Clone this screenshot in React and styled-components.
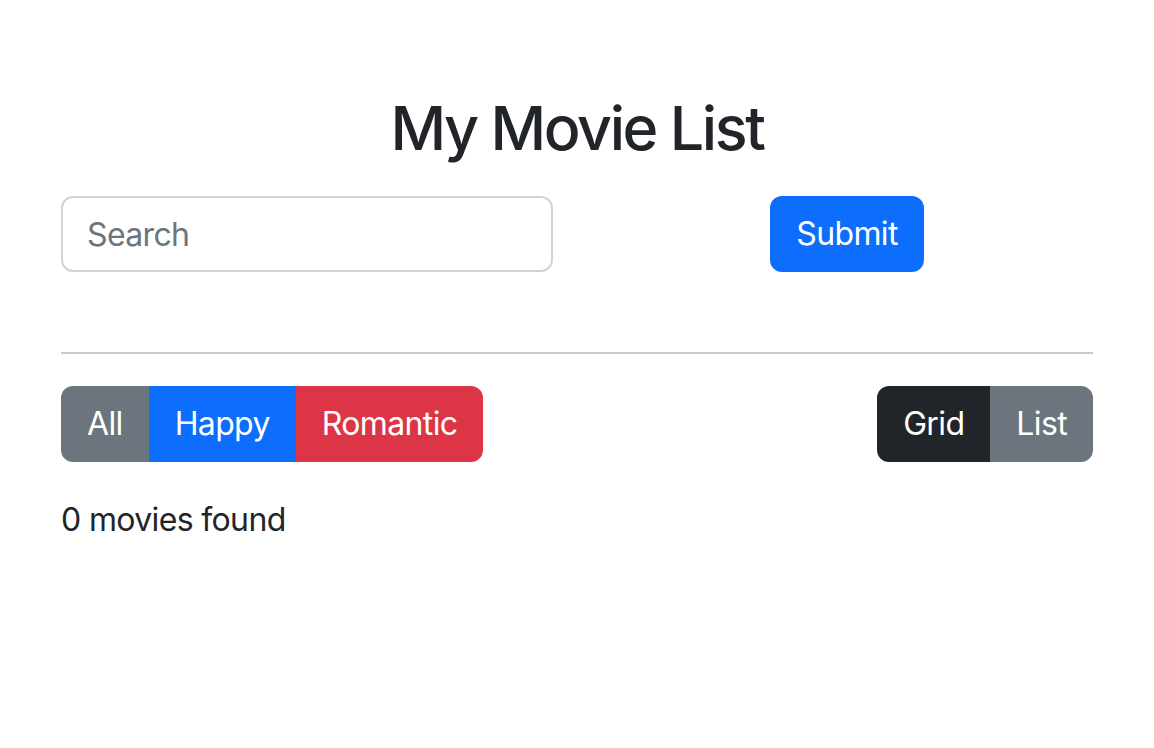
import React from "react";
import styled, { createGlobalStyle } from "styled-components";

const Global = createGlobalStyle`
  html, body { margin: 0; padding: 0; background: #fff; }
  body {
    font-family: Inter, "Noto Sans", "Liberation Sans", sans-serif;
    font-size: 32px;
    line-height: 1.5;
    letter-spacing: -0.02em;
    color: #212529;
  }
  * { box-sizing: border-box; }
`;

const Container = styled.div`
  width: 1080px;
  margin: 0 auto;
  padding: 92px 24px 0;
`;

const Title = styled.h1`
  margin: 0 0 31px;
  text-align: center;
  font-size: 61px;
  font-weight: 500;
  line-height: 1.2;
  letter-spacing: -0.04em;
`;

const Row = styled.form`
  display: grid;
  grid-template-columns: 1fr 1fr;
  column-gap: 48px;
`;

const Cell = styled.div`
  display: flex;
  justify-content: ${(p) => (p.$center ? "center" : "stretch")};
`;

const Input = styled.input`
  width: 100%;
  height: 76px;
  padding: 12px 24px;
  font: inherit;
  letter-spacing: inherit;
  color: #212529;
  border: 2px solid #ced4da;
  border-radius: 12px;
  outline: none;
  &::placeholder { color: #6c757d; }
`;

const Btn = styled.button`
  font: inherit;
  letter-spacing: inherit;
  color: #fff;
  background: ${(p) => p.$bg};
  border: 2px solid ${(p) => p.$bg};
  padding: 12px 24px;
  border-radius: 12px;
  height: 76px;
  line-height: 1.5;
  cursor: pointer;
`;

const Divider = styled.hr`
  margin: 80px 0 32px;
  border: 0;
  border-top: 2px solid #c8c9ca;
`;

const Toolbar = styled.div`
  display: flex;
  justify-content: space-between;
  align-items: center;
`;

const Group = styled.div`
  display: inline-flex;
  & > button { border-radius: 0; }
  & > button:first-child { border-radius: 12px 0 0 12px; }
  & > button:last-child { border-radius: 0 12px 12px 0; }
`;

const Count = styled.p`
  margin: 34px 0 0;
  font-size: 32px;
`;

export default function App() {
  return (
    <>
      <Global />
      <Container>
        <Title>My Movie List</Title>
        <Row onSubmit={(e) => e.preventDefault()}>
          <Cell>
            <Input type="text" placeholder="Search" />
          </Cell>
          <Cell $center>
            <Btn type="submit" $bg="#0d6efd">Submit</Btn>
          </Cell>
        </Row>
        <Divider />
        <Toolbar>
          <Group>
            <Btn $bg="#6c757d">All</Btn>
            <Btn $bg="#0d6efd">Happy</Btn>
            <Btn $bg="#dc3545">Romantic</Btn>
          </Group>
          <Group>
            <Btn $bg="#212529">Grid</Btn>
            <Btn $bg="#6c757d">List</Btn>
          </Group>
        </Toolbar>
        <Count>0 movies found</Count>
      </Container>
    </>
  );
}
